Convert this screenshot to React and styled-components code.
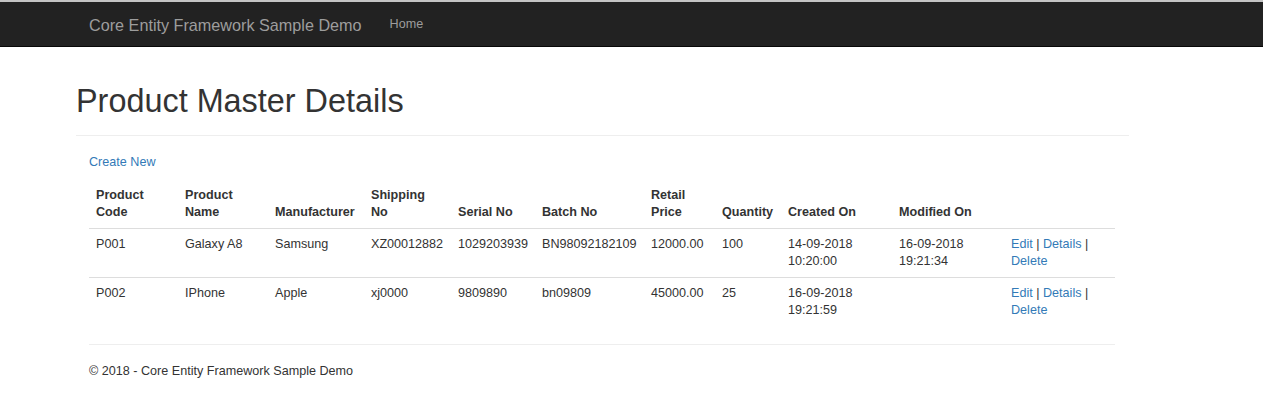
import React from 'react';
import styled, { createGlobalStyle } from 'styled-components';

const GlobalStyle = createGlobalStyle`
  html, body {
    margin: 0;
    padding: 0;
    background: #fff;
  }
  body {
    font-family: "Liberation Sans", Arial, Helvetica, sans-serif;
    font-size: 12.6px;
    line-height: 17px;
    color: #333;
  }
`;

const Navbar = styled.nav`
  height: 44px;
  background-color: #222;
  border-top: 2px solid #c4c4c4;
  border-bottom: 1px solid #080808;
  display: flex;
  align-items: center;
  padding-left: 89px;
`;

const Brand = styled.a`
  font-size: 16.2px;
  color: #9d9d9d;
  text-decoration: none;
  margin-right: 28px;
  margin-top: 2px;
`;

const NavLink = styled.a`
  font-size: 12.6px;
  color: #9d9d9d;
  text-decoration: none;
  margin-top: 1px;
`;

const Page = styled.div`
  width: 1053px;
  margin-left: 76px;
`;

const Title = styled.h1`
  font-size: 32.4px;
  line-height: 35.6px;
  font-weight: 500;
  margin: 37px 0 0;
  color: #333;
`;

const Rule = styled.hr`
  border: 0;
  border-top: 1px solid #eee;
  margin: ${(p) => p.$top}px 0 ${(p) => p.$bottom}px;
`;

const Body = styled.div`
  padding: 0 14px 0 13px;
`;

const LinkText = styled.a`
  color: #337ab7;
  text-decoration: none;
`;

const Para = styled.p`
  margin: 0 0 9px;
`;

const Table = styled.table`
  width: 1026px;
  table-layout: fixed;
  border-collapse: collapse;
  border-spacing: 0;
  margin-bottom: 18px;
`;

const Th = styled.th`
  text-align: left;
  vertical-align: bottom;
  font-weight: bold;
  padding: 7px;
  border-bottom: 1px solid #ddd;
`;

const Td = styled.td`
  vertical-align: top;
  padding: 7px;
  border-top: 1px solid #ddd;
`;

const Footer = styled.footer`
  padding-bottom: 20px;
`;

const widths = [89, 90, 96, 87, 84, 109, 71, 66, 111, 112, 111];

const headers = [
  ['Product', 'Code'],
  ['Product', 'Name'],
  ['Manufacturer'],
  ['Shipping', 'No'],
  ['Serial No'],
  ['Batch No'],
  ['Retail', 'Price'],
  ['Quantity'],
  ['Created On'],
  ['Modified On'],
  [],
];

const rows = [
  {
    code: 'P001',
    name: 'Galaxy A8',
    maker: 'Samsung',
    ship: 'XZ00012882',
    serial: '1029203939',
    batch: 'BN98092182109',
    price: '12000.00',
    qty: '100',
    created: ['14-09-2018', '10:20:00'],
    modified: ['16-09-2018', '19:21:34'],
  },
  {
    code: 'P002',
    name: 'IPhone',
    maker: 'Apple',
    ship: 'xj0000',
    serial: '9809890',
    batch: 'bn09809',
    price: '45000.00',
    qty: '25',
    created: ['16-09-2018', '19:21:59'],
    modified: [],
  },
];

const Lines = ({ parts }) =>
  parts.map((p, i) => (
    <React.Fragment key={i}>
      {i > 0 && <br />}
      {p}
    </React.Fragment>
  ));

const App = () => (
  <>
    <GlobalStyle />
    <Navbar>
      <Brand href="#">Core Entity Framework Sample Demo</Brand>
      <NavLink href="#">Home</NavLink>
    </Navbar>
    <Page>
      <Title>Product Master Details</Title>
      <Rule $top={15} $bottom={18} />
      <Body>
        <Para>
          <LinkText href="#">Create New</LinkText>
        </Para>
        <Table>
          <colgroup>
            {widths.map((w, i) => (
              <col key={i} style={{ width: w }} />
            ))}
          </colgroup>
          <thead>
            <tr>
              {headers.map((h, i) => (
                <Th key={i}>
                  <Lines parts={h} />
                </Th>
              ))}
            </tr>
          </thead>
          <tbody>
            {rows.map((r) => (
              <tr key={r.code}>
                <Td>{r.code}</Td>
                <Td>{r.name}</Td>
                <Td>{r.maker}</Td>
                <Td>{r.ship}</Td>
                <Td>{r.serial}</Td>
                <Td>{r.batch}</Td>
                <Td>{r.price}</Td>
                <Td>{r.qty}</Td>
                <Td>
                  <Lines parts={r.created} />
                </Td>
                <Td>
                  <Lines parts={r.modified} />
                </Td>
                <Td>
                  <LinkText href="#">Edit</LinkText> |{' '}
                  <LinkText href="#">Details</LinkText> |{' '}
                  <LinkText href="#">Delete</LinkText>
                </Td>
              </tr>
            ))}
          </tbody>
        </Table>
        <Rule $top={0} $bottom={18} />
        <Footer>
          <Para>© 2018 - Core Entity Framework Sample Demo</Para>
        </Footer>
      </Body>
    </Page>
  </>
);

export default App;
